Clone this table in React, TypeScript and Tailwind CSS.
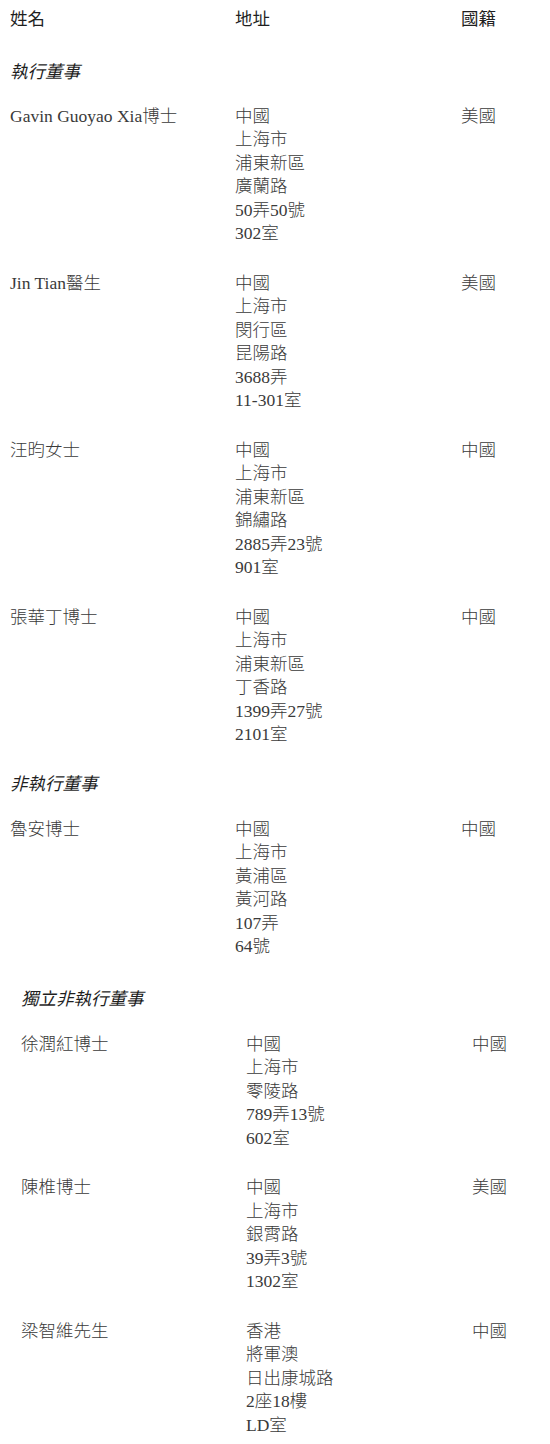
import React from "react";

type Row = { name: string; addr: string[]; nat: string };

const exec: Row[] = [
  { name: "Gavin Guoyao Xia博士", addr: ["中國", "上海市", "浦東新區", "廣蘭路", "50弄50號", "302室"], nat: "美國" },
  { name: "Jin Tian醫生", addr: ["中國", "上海市", "閔行區", "昆陽路", "3688弄", "11-301室"], nat: "美國" },
  { name: "汪昀女士", addr: ["中國", "上海市", "浦東新區", "錦繡路", "2885弄23號", "901室"], nat: "中國" },
  { name: "張華丁博士", addr: ["中國", "上海市", "浦東新區", "丁香路", "1399弄27號", "2101室"], nat: "中國" },
];
const nonExec: Row[] = [
  { name: "魯安博士", addr: ["中國", "上海市", "黃浦區", "黃河路", "107弄", "64號"], nat: "中國" },
];
const indep: Row[] = [
  { name: "徐潤紅博士", addr: ["中國", "上海市", "零陵路", "789弄13號", "602室"], nat: "中國" },
  { name: "陳椎博士", addr: ["中國", "上海市", "銀霄路", "39弄3號", "1302室"], nat: "美國" },
  { name: "梁智維先生", addr: ["香港", "將軍澳", "日出康城路", "2座18樓", "LD室"], nat: "中國" },
];

const serif = "font-['Liberation_Serif','Noto_Sans_CJK_TC',serif]";
const sans = "font-['Noto_Sans_CJK_TC','Noto_Sans',sans-serif]";

function Rows({ rows }: { rows: Row[] }) {
  return (
    <div className="flex flex-col gap-[26px]">
      {rows.map((r) => (
        <div key={r.name} className={`grid grid-cols-[225px_226px_1fr] ${serif} font-light text-[#3a3a3a]`}>
          <div>{r.name}</div>
          <div className="flex flex-col">
            {r.addr.map((a) => (
              <div key={a}>{a}</div>
            ))}
          </div>
          <div>{r.nat}</div>
        </div>
      ))}
    </div>
  );
}

function SectionTitle({ children }: { children: React.ReactNode }) {
  return <div className={`${sans} italic font-normal text-[#1f1f1f]`}>{children}</div>;
}

export default function App() {
  return (
    <div className="w-[550px] h-[1444px] bg-white text-[17.5px] leading-[23.5px] pl-[10px] pt-[6px] overflow-hidden">
      <div className={`grid grid-cols-[225px_226px_1fr] ${sans} font-normal text-[#1f1f1f]`}>
        <div>姓名</div>
        <div>地址</div>
        <div>國籍</div>
      </div>

      <div className="mt-[29.5px]">
        <SectionTitle>執行董事</SectionTitle>
        <div className="mt-[22px]">
          <Rows rows={exec} />
        </div>
      </div>

      <div className="mt-[24px]">
        <SectionTitle>非執行董事</SectionTitle>
        <div className="mt-[23.5px]">
          <Rows rows={nonExec} />
        </div>
      </div>

      <div className="mt-[27px] pl-[11px]">
        <SectionTitle>獨立非執行董事</SectionTitle>
        <div className="mt-[23.5px]">
          <Rows rows={indep} />
        </div>
      </div>
    </div>
  );
}
